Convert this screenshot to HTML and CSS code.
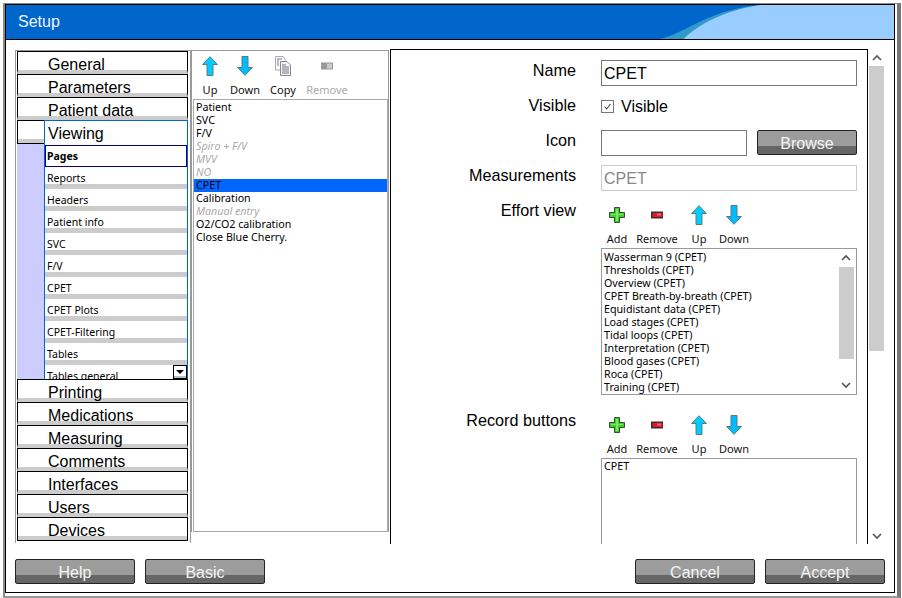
FILE: index.html
```html
<!DOCTYPE html>
<html lang="en">
<head>
<meta charset="utf-8">
<title>Setup</title>
<link rel="stylesheet" href="styles.css">
</head>
<body>
<svg class="defs" width="0" height="0" aria-hidden="true">
  <defs>
    <symbol id="i-up" viewBox="0 0 16 20"><path d="M8 .7 15.4 8.5H11V19.5H5V8.5H.6Z" fill="#00ccff" stroke="#5a7a80"/></symbol>
    <symbol id="i-down" viewBox="0 0 16 20"><path d="M5 .5H11V11.5H15.4L8 19.3.6 11.5H5Z" fill="#00bbff" stroke="#5a7a80"/></symbol>
    <symbol id="i-add" viewBox="0 0 16 20"><path d="M5.5 2.5H10.5V7.5H15.5V12.5H10.5V17.5H5.5V12.5H.5V7.5H5.5Z" fill="#44cc33" stroke="#2f4f2f"/><path d="M7 4H9V9H14V10H9V16H7V10H2V9H7Z" fill="#77ee55"/></symbol>
    <symbol id="i-remove" viewBox="0 0 16 20"><rect x="2" y="6.5" width="12" height="7" fill="#333"/><rect x="3.500" y="8" width="10" height="4" fill="#ee1122"/><rect x="8" y="8.500" width="4" height="2" fill="#ff6666"/></symbol>
    <symbol id="i-remove-off" viewBox="0 0 16 20"><rect x="2" y="6.500" width="12" height="7" fill="#999"/><rect x="8" y="7.500" width="5" height="5" fill="#ccc"/></symbol>
    <symbol id="i-copy" viewBox="0 0 18 20"><path d="M1.500 .5H9L11 3V14H1.500Z" fill="#fff" stroke="#aaa"/><path d="M6.500 5.500H13L16.500 9V19.500H6.500Z" fill="#f4f4f4" stroke="#889"/><path d="M3 3H8M3 5H5M3 7H5M3 9H5M8 9H12M8 11H15M8 13H15M8 15H15M8 17H15" stroke="#778" fill="none"/></symbol>
    <symbol id="i-chev-up" viewBox="0 0 10 7"><path d="M1 5.500 5 1.500 9 5.500" fill="none" stroke="#555" stroke-width="1.600"/></symbol>
    <symbol id="i-chev-down" viewBox="0 0 10 7"><path d="M1 1.500 5 5.500 9 1.500" fill="none" stroke="#555" stroke-width="1.600"/></symbol>
  </defs>
</svg>
<div class="frame">
  <div class="window">
    <header class="titlebar">
      <span class="title">Setup</span>
      <svg class="wave" viewBox="0 0 887 34" preserveAspectRatio="none" aria-hidden="true">
        <path d="M654 34C682 26 704 4 754 0L770 0 677 34Z" fill="#3399cc"/>
        <path d="M677 34C690 20 718 5 754 0H887V34Z" fill="#99ccff"/>
      </svg>
    </header>

    <main class="main">
      <nav class="nav-frame">
        <div class="nav">
          <div class="nav-item">General</div>
          <div class="nav-item">Parameters</div>
          <div class="nav-item">Patient data</div>
          <div class="nav-open">
            <div class="rail">
              <div class="rail-tab"></div>
              <div class="rail-fill"></div>
            </div>
            <div class="sub-panel">
              <div class="sub-title">Viewing</div>
              <div class="sub-item sub-active">Pages</div>
              <div class="sub-item">Reports</div>
              <div class="sub-item">Headers</div>
              <div class="sub-item">Patient info</div>
              <div class="sub-item">SVC</div>
              <div class="sub-item">F/V</div>
              <div class="sub-item">CPET</div>
              <div class="sub-item">CPET Plots</div>
              <div class="sub-item">CPET-Filtering</div>
              <div class="sub-item">Tables</div>
              <div class="sub-item">Tables general</div>
              <div class="sub-more"><span class="sub-tri"></span></div>
            </div>
          </div>
          <div class="nav-item">Printing</div>
          <div class="nav-item">Medications</div>
          <div class="nav-item">Measuring</div>
          <div class="nav-item">Comments</div>
          <div class="nav-item">Interfaces</div>
          <div class="nav-item">Users</div>
          <div class="nav-item">Devices</div>
        </div>
      </nav>

      <section class="pages">
        <div class="toolbar">
          <div class="tool tool-34"><svg class="tool-icon"><use href="#i-up"/></svg><span>Up</span></div>
          <div class="tool tool-36"><svg class="tool-icon"><use href="#i-down"/></svg><span>Down</span></div>
          <div class="tool tool-40"><svg class="tool-icon tool-icon-wide"><use href="#i-copy"/></svg><span>Copy</span></div>
          <div class="tool tool-48 tool-off"><svg class="tool-icon"><use href="#i-remove-off"/></svg><span>Remove</span></div>
        </div>
        <ul class="list page-list">
          <li>Patient</li>
          <li>SVC</li>
          <li>F/V</li>
          <li class="off">Spiro + F/V</li>
          <li class="off">MVV</li>
          <li class="off">NO</li>
          <li class="sel">CPET</li>
          <li>Calibration</li>
          <li class="off">Manual entry</li>
          <li>O2/CO2 calibration</li>
          <li>Close Blue Cherry.</li>
        </ul>
      </section>

      <section class="panel">
        <div class="row">
          <div class="label">Name</div>
          <div class="field"><div class="input">CPET</div></div>
        </div>
        <div class="row">
          <div class="label">Visible</div>
          <div class="field check-field">
            <span class="check"><svg viewBox="0 0 13 13"><path d="M3 6.500 5.500 9.500 10 3.500" fill="none" stroke="#444" stroke-width="1.200"/></svg></span>
            <span>Visible</span>
          </div>
        </div>
        <div class="row">
          <div class="label">Icon</div>
          <div class="field icon-field">
            <div class="input input-short"></div>
            <button class="btn btn-browse" type="button">Browse</button>
          </div>
        </div>
        <div class="row">
          <div class="label">Measurements</div>
          <div class="field"><div class="input input-off">CPET</div></div>
        </div>
        <div class="row row-block row-effort">
          <div class="label">Effort view</div>
          <div class="field">
            <div class="toolbar">
              <div class="tool tool-32"><svg class="tool-icon"><use href="#i-add"/></svg><span>Add</span></div>
              <div class="tool tool-48"><svg class="tool-icon"><use href="#i-remove"/></svg><span>Remove</span></div>
              <div class="tool tool-36"><svg class="tool-icon"><use href="#i-up"/></svg><span>Up</span></div>
              <div class="tool tool-34"><svg class="tool-icon"><use href="#i-down"/></svg><span>Down</span></div>
            </div>
            <div class="list-box effort-box">
              <ul class="list-plain">
                <li>Wasserman 9 (CPET)</li>
                <li>Thresholds (CPET)</li>
                <li>Overview (CPET)</li>
                <li>CPET Breath-by-breath (CPET)</li>
                <li>Equidistant data (CPET)</li>
                <li>Load stages (CPET)</li>
                <li>Tidal loops (CPET)</li>
                <li>Interpretation (CPET)</li>
                <li>Blood gases (CPET)</li>
                <li>Roca (CPET)</li>
                <li>Training (CPET)</li>
              </ul>
              <div class="mini-sb">
                <svg class="chev-mini"><use href="#i-chev-up"/></svg>
                <div class="mini-thumb"></div>
                <svg class="chev-mini chev-end"><use href="#i-chev-down"/></svg>
              </div>
            </div>
          </div>
        </div>
        <div class="row row-block">
          <div class="label">Record buttons</div>
          <div class="field">
            <div class="toolbar">
              <div class="tool tool-32"><svg class="tool-icon"><use href="#i-add"/></svg><span>Add</span></div>
              <div class="tool tool-48"><svg class="tool-icon"><use href="#i-remove"/></svg><span>Remove</span></div>
              <div class="tool tool-36"><svg class="tool-icon"><use href="#i-up"/></svg><span>Up</span></div>
              <div class="tool tool-34"><svg class="tool-icon"><use href="#i-down"/></svg><span>Down</span></div>
            </div>
            <div class="list-box record-box">
              <ul class="list-plain"><li>CPET</li></ul>
            </div>
          </div>
        </div>
      </section>

      <div class="page-sb">
        <svg class="chev-page"><use href="#i-chev-up"/></svg>
        <div class="page-thumb"></div>
        <svg class="chev-page chev-end"><use href="#i-chev-down"/></svg>
      </div>
    </main>

    <footer class="footer">
      <button class="btn" type="button">Help</button>
      <button class="btn" type="button">Basic</button>
      <span class="footer-gap"></span>
      <button class="btn" type="button">Cancel</button>
      <button class="btn" type="button">Accept</button>
    </footer>
  </div>
</div>
</body>
</html>
```
FILE: styles.css
```css
* { box-sizing: border-box; }
html, body { margin: 0; padding: 0; }
body {
  width: 902px;
  height: 598px;
  overflow: hidden;
  background: #fff;
  font-family: "Liberation Sans", Arial, sans-serif;
  font-size: 16px;
  color: #000;
}
.defs { position: absolute; }

.frame {
  width: 898px;
  height: 595px;
  margin: 3px 0 0 3px;
  padding-right: 2px;
  padding-bottom: 3px;
  border-top: 1px solid #888;
  border-left: 2px solid #888;
  border-right: 4px solid #777;
  border-bottom: 2px solid #999;
}
.window {
  width: 890px;
  height: 589px;
  border: 1px solid #000;
  background: #fff;
}

.titlebar {
  position: relative;
  height: 35px;
  padding-left: 12px;
  background: #0066cc;
  border-bottom: 1px solid #000;
  color: #eef6ff;
  line-height: 33px;
}
.title { position: relative; z-index: 1; }
.wave { position: absolute; left: 0; top: 0; width: 100%; height: 34px; }

.main {
  display: flex;
  align-items: flex-start;
  height: 504px;
  padding: 9px 0 0 9px;
}

.nav-frame {
  width: 176px;
  height: 493px;
  margin-top: 1px;
  padding-left: 1px;
  border-top: 1px solid #999;
  border-left: 1px solid #999;
  border-right: 1px solid #999;
}
.nav { width: 171px; }
.nav-item {
  height: 23px;
  padding-left: 30px;
  border: 1px solid #000;
  border-bottom: 4px solid #ccc;
  line-height: 26px;
  white-space: nowrap;
}
.nav-item:last-child { height: 24px; border-bottom: 0; box-shadow: inset 0 -1px #000, inset 0 -5px #ccc; }

.nav-open { display: flex; height: 259px; }
.rail { display: flex; flex-direction: column; width: 27px; }
.rail-tab {
  height: 24px;
  border-top: 1px solid #000;
  border-left: 1px solid #000;
  border-bottom: 1px solid #000;
  box-shadow: inset 0 -4px #ccc;
}
.rail-fill { flex: 1; background: #ccccff; }
.sub-panel {
  position: relative;
  width: 144px;
  overflow: hidden;
  border: 1px solid #0066cc;
  border-bottom: 0;
}
.sub-title { height: 24px; padding-left: 3px; line-height: 26px; }
.sub-item {
  height: 22px;
  padding-left: 2px;
  border-bottom: 5px solid #ccc;
  font-family: "Noto Sans", "Liberation Sans", sans-serif;
  font-size: 10.500px;
  line-height: 22px;
  white-space: nowrap;
}
.sub-active { border: 1px solid #000080; padding-left: 1px; line-height: 20px; font-weight: 700; }
.sub-more {
  position: absolute;
  right: 0;
  bottom: 0;
  width: 14px;
  height: 14px;
  padding: 4px 0 0 2px;
  background: #fff;
  border: 1px solid #000;
  box-shadow: inset 0 -2px #bbb;
}
.sub-tri {
  display: block;
  width: 0;
  height: 0;
  border-left: 4px solid transparent;
  border-right: 4px solid transparent;
  border-top: 4px solid #000;
}

.pages {
  width: 198px;
  height: 482px;
  margin-top: 1px;
  margin-right: 1px;
  padding-left: 1px;
  border-top: 1px solid #999;
  border-left: 1px solid #999;
  border-right: 1px solid #999;
}
.toolbar { display: flex; height: 48px; }
.tool {
  display: flex;
  flex-direction: column;
  align-items: center;
  padding-top: 5px;
  font-family: "Noto Sans", "Liberation Sans", sans-serif;
  font-size: 11px;
  line-height: 14px;
  white-space: nowrap;
  color: #111;
}
.tool span { margin-top: 7px; }
.tool-icon { width: 16px; height: 20px; flex: none; }
.tool-icon-wide { width: 18px; }
.tool-off { color: #aaa; }
.tool-32 { width: 32px; }
.tool-34 { width: 34px; }
.tool-36 { width: 36px; }
.tool-40 { width: 40px; }
.tool-48 { width: 48px; }

.list, .list-plain {
  margin: 0;
  padding: 1px 0 0;
  list-style: none;
  font-family: "Noto Sans", "Liberation Sans", sans-serif;
  font-size: 10.700px;
  line-height: 13px;
}
.list-plain li { padding-left: 2px; white-space: nowrap; }
.effort-box .list-plain { padding-top: 2px; }
.page-list {
  width: 195px;
  height: 433px;
  border: 1px solid #aaa;
}
.page-list li { padding-left: 2px; }
.off { color: #aaa; font-style: italic; }
.sel { background: #0066ff; }

.panel {
  width: 478px;
  height: 495px;
  padding-top: 10px;
  overflow: hidden;
  border-top: 1px solid #000;
  border-left: 1px solid #000;
  border-right: 1px solid #000;
}
.row { display: flex; gap: 25px; height: 35px; }
.row-block { height: auto; }
.row-effort { margin-bottom: 15px; }
.label { width: 185px; flex: none; text-align: right; font-size: 16.200px; line-height: 20px; }
.field { width: 256px; }
.input {
  height: 26px;
  padding-left: 2px;
  border: 1px solid #777;
  line-height: 25px;
}
.input-short { width: 146px; flex: none; }
.input-off { border-color: #ccc; color: #888; }
.check-field { display: flex; align-items: center; gap: 7px; height: 23px; }
.check { display: block; width: 13px; height: 13px; border: 1px solid #777; }
.check svg { display: block; width: 11px; height: 11px; }
.icon-field { display: flex; gap: 10px; }

.list-box { display: flex; justify-content: space-between; border: 1px solid #999; }
.effort-box { height: 147px; }
.record-box { height: 120px; }
.mini-sb { display: flex; flex-direction: column; align-items: center; width: 16px; margin-right: 2px; }
.mini-thumb { width: 15px; height: 92px; margin-bottom: auto; background: #ccc; }
.chev-mini { width: 10px; height: 18px; flex: none; }
.page-sb { display: flex; flex-direction: column; align-items: center; width: 15px; height: 494px; margin-top: 1px; margin-left: 1px; }
.page-thumb { width: 15px; height: 285px; margin-bottom: auto; background: #ccc; }
.chev-page { width: 10px; height: 16px; flex: none; }

.footer {
  display: flex;
  gap: 10px;
  padding: 15px 9px 0;
}
.footer-gap { flex: 1; }
.btn {
  width: 120px;
  height: 25px;
  padding: 2px 0 0;
  border: 1px solid #222;
  border-radius: 2px;
  background: linear-gradient(#9c9c9c 0, #9c9c9c 15px, #666 15px, #666 100%);
  color: #f4f4f4;
  font-family: "Liberation Sans", Arial, sans-serif;
  font-size: 16px;
  line-height: 22px;
}
.btn-browse { width: 100px; flex: none; }
```
